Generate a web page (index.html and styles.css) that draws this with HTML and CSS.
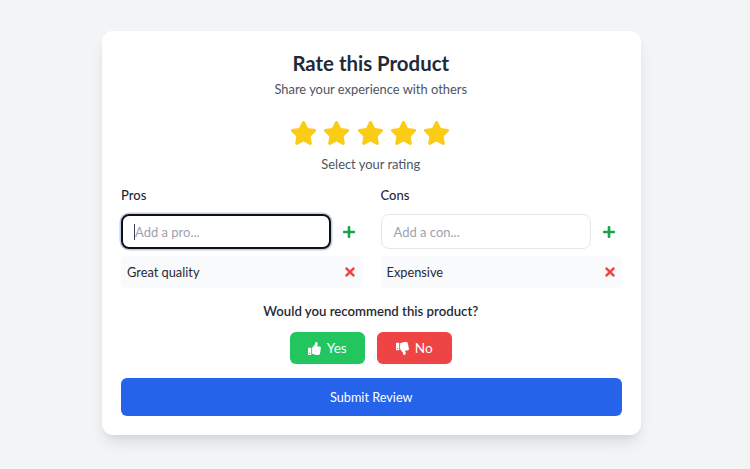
FILE: index.html
```html
<!DOCTYPE html>
<html lang="en">
<head>
<meta charset="utf-8">
<title>Rate this Product</title>
<link rel="stylesheet" href="styles.css">
</head>
<body>
<main class="card">
  <h1 class="title">Rate this Product</h1>
  <p class="subtitle">Share your experience with others</p>
  <div class="stars">
    <svg class="star" viewBox="0 0 576 512"><path d="M259.3 17.8L194 150.2 47.9 171.5c-26.2 3.8-36.7 36.1-17.7 54.6l105.7 103-25 145.5c-4.5 26.3 23.2 46 46.4 33.7L288 439.6l130.7 68.7c23.2 12.2 50.9-7.4 46.4-33.7l-25-145.5 105.7-103c19-18.5 8.5-50.8-17.7-54.6L382 150.2 316.7 17.8c-11.7-23.6-45.6-23.9-57.4 0z"/></svg>
    <svg class="star" viewBox="0 0 576 512"><path d="M259.3 17.8L194 150.2 47.9 171.5c-26.2 3.8-36.7 36.1-17.7 54.6l105.7 103-25 145.5c-4.5 26.3 23.2 46 46.4 33.7L288 439.6l130.7 68.7c23.2 12.2 50.9-7.4 46.4-33.7l-25-145.5 105.7-103c19-18.5 8.5-50.8-17.7-54.6L382 150.2 316.7 17.8c-11.7-23.6-45.6-23.9-57.4 0z"/></svg>
    <svg class="star" viewBox="0 0 576 512"><path d="M259.3 17.8L194 150.2 47.9 171.5c-26.2 3.8-36.7 36.1-17.7 54.6l105.7 103-25 145.5c-4.5 26.3 23.2 46 46.4 33.7L288 439.6l130.7 68.7c23.2 12.2 50.9-7.4 46.4-33.7l-25-145.5 105.7-103c19-18.5 8.5-50.8-17.7-54.6L382 150.2 316.7 17.8c-11.7-23.6-45.6-23.9-57.4 0z"/></svg>
    <svg class="star" viewBox="0 0 576 512"><path d="M259.3 17.8L194 150.2 47.9 171.5c-26.2 3.8-36.7 36.1-17.7 54.6l105.7 103-25 145.5c-4.5 26.3 23.2 46 46.4 33.7L288 439.6l130.7 68.7c23.2 12.2 50.9-7.4 46.4-33.7l-25-145.5 105.7-103c19-18.5 8.5-50.8-17.7-54.6L382 150.2 316.7 17.8c-11.7-23.6-45.6-23.9-57.4 0z"/></svg>
    <svg class="star" viewBox="0 0 576 512"><path d="M259.3 17.8L194 150.2 47.9 171.5c-26.2 3.8-36.7 36.1-17.7 54.6l105.7 103-25 145.5c-4.5 26.3 23.2 46 46.4 33.7L288 439.6l130.7 68.7c23.2 12.2 50.9-7.4 46.4-33.7l-25-145.5 105.7-103c19-18.5 8.5-50.8-17.7-54.6L382 150.2 316.7 17.8c-11.7-23.6-45.6-23.9-57.4 0z"/></svg>
  </div>
  <p class="hint">Select your rating</p>
  <div class="columns">
    <section class="column">
      <h2 class="label">Pros</h2>
      <div class="entry">
        <div class="field field-focus"><span class="caret"></span><span class="placeholder">Add a pro...</span></div>
        <svg class="plus" viewBox="0 0 448 512"><path d="M416 208H272V64c0-17.7-14.3-32-32-32h-32c-17.7 0-32 14.3-32 32v144H32c-17.7 0-32 14.3-32 32v32c0 17.7 14.3 32 32 32h144v144c0 17.7 14.3 32 32 32h32c17.7 0 32-14.3 32-32V304h144c17.7 0 32-14.3 32-32v-32c0-17.7-14.3-32-32-32z"/></svg>
      </div>
      <div class="item"><span>Great quality</span>
        <svg class="cross" viewBox="0 0 352 512"><path d="M242.7 256l100.1-100.1c12.3-12.3 12.3-32.2 0-44.5l-22.2-22.2c-12.3-12.3-32.2-12.3-44.5 0L176 189.3 75.9 89.2c-12.3-12.3-32.2-12.3-44.5 0L9.2 111.4c-12.3 12.3-12.3 32.2 0 44.5L109.3 256 9.2 356.1c-12.3 12.3-12.3 32.2 0 44.5l22.2 22.2c12.3 12.3 32.2 12.3 44.5 0L176 322.7l100.1 100.1c12.3 12.3 32.2 12.3 44.5 0l22.2-22.2c12.3-12.3 12.3-32.2 0-44.5L242.7 256z"/></svg>
      </div>
    </section>
    <section class="column">
      <h2 class="label">Cons</h2>
      <div class="entry">
        <div class="field"><span class="placeholder">Add a con...</span></div>
        <svg class="plus" viewBox="0 0 448 512"><path d="M416 208H272V64c0-17.7-14.3-32-32-32h-32c-17.7 0-32 14.3-32 32v144H32c-17.7 0-32 14.3-32 32v32c0 17.7 14.3 32 32 32h144v144c0 17.7 14.3 32 32 32h32c17.7 0 32-14.3 32-32V304h144c17.7 0 32-14.3 32-32v-32c0-17.7-14.3-32-32-32z"/></svg>
      </div>
      <div class="item"><span>Expensive</span>
        <svg class="cross" viewBox="0 0 352 512"><path d="M242.7 256l100.1-100.1c12.3-12.3 12.3-32.2 0-44.5l-22.2-22.2c-12.3-12.3-32.2-12.3-44.5 0L176 189.3 75.9 89.2c-12.3-12.3-32.2-12.3-44.5 0L9.2 111.4c-12.3 12.3-12.3 32.2 0 44.5L109.3 256 9.2 356.1c-12.3 12.3-12.3 32.2 0 44.5l22.2 22.2c12.3 12.3 32.2 12.3 44.5 0L176 322.7l100.1 100.1c12.3 12.3 32.2 12.3 44.5 0l22.2-22.2c12.3-12.3 12.3-32.2 0-44.5L242.7 256z"/></svg>
      </div>
    </section>
  </div>
  <p class="question">Would you recommend this product?</p>
  <div class="choices">
    <button class="choice yes">
      <svg class="thumb" viewBox="0 0 512 512"><path d="M104 224H24c-13.3 0-24 10.7-24 24v240c0 13.3 10.7 24 24 24h80c13.3 0 24-10.7 24-24V248c0-13.3-10.7-24-24-24zM64 472c-13.3 0-24-10.7-24-24s10.7-24 24-24 24 10.7 24 24-10.7 24-24 24zM384 81.5c0 42.4-26 66.2-33.3 94.5h101.7c33.4 0 59.4 27.7 59.6 58.1.1 17.9-7.5 37.2-19.4 49.2l-.1.1c9.8 23.3 8.2 56-9.3 79.4 8.7 25.9-.1 57.7-16.4 74.8 4.3 17.6 2.2 32.6-6.1 44.6C440.2 511.6 389.6 512 346.8 512l-2.8 0c-48.3 0-87.8-17.6-119.6-31.7-16-7.1-36.8-15.9-52.7-16.2-6.5-.1-11.8-5.5-11.8-12v-213.8c0-3.2 1.3-6.3 3.6-8.5 39.6-39.1 56.6-80.5 89.1-113 14.8-14.8 20.2-37.2 25.4-58.9C282.5 39.3 291.8 0 312 0c24 0 72 8 72 81.5z"/></svg>
      <span>Yes</span>
    </button>
    <button class="choice no">
      <svg class="thumb" viewBox="0 0 512 512"><path d="M0 56v240c0 13.3 10.7 24 24 24h80c13.3 0 24-10.7 24-24V56c0-13.3-10.7-24-24-24H24C10.7 32 0 42.7 0 56zm40 200c0-13.3 10.7-24 24-24s24 10.7 24 24-10.7 24-24 24-24-10.7-24-24zm272 256c-20.2 0-29.5-39.3-33.9-57.8-5.2-21.7-10.6-44.1-25.4-58.9-32.5-32.5-49.5-73.9-89.1-113-2.3-2.2-3.6-5.3-3.6-8.5V59.9c0-6.5 5.3-11.9 11.8-12 15.9-.3 36.7-9.1 52.7-16.2C256.2 17.6 295.7 0 344 0h2.8c42.8 0 93.4.4 113.8 29.8 8.3 12 10.4 27 6.1 44.6 16.3 17.1 25.1 48.9 16.4 74.8 17.5 23.4 19.1 56.1 9.3 79.4l.1.1c11.9 12 19.5 31.3 19.4 49.2-.2 30.4-26.2 58.1-59.6 58.1H350.7c7.3 28.3 33.3 52.1 33.3 94.5C384 504 336 512 312 512z"/></svg>
      <span>No</span>
    </button>
  </div>
  <button class="submit">Submit Review</button>
</main>
</body>
</html>
```

FILE: styles.css
```css
* { box-sizing: border-box; }
html, body { margin: 0; height: 100%; }
body {
  background: #f3f4f6;
  font-family: "Lato", "Noto Sans", sans-serif;
  color: #1f2937;
  padding: 31px 109.5px 0 102px;
}
.card {
  width: 538.5px;
  height: 404px;
  background: #fff;
  border-radius: 11px;
  padding: 19px;
  box-shadow: 0 10px 15px -3px rgba(0,0,0,.1), 0 4px 6px -2px rgba(0,0,0,.05);
  display: flex;
  flex-direction: column;
}
.title { margin: 0; padding-right: 1px; font-size: 20.4px; line-height: 27px; font-weight: 700; text-align: center; color: #1f2937; }
.subtitle { margin: 3px 0 0; padding-right: 1px; font-size: 12.9px; line-height: 19px; text-align: center; color: #4b5563; }
.stars { display: flex; justify-content: center; gap: 6.3px; margin-top: 22px; padding-right: 2px; }
.star { width: 27px; height: 24px; fill: #facc15; display: block; }
.hint { margin: 10px 0 0; padding-right: 1px; font-size: 12.9px; line-height: 19px; text-align: center; color: #4b5563; }
.columns { display: grid; grid-template-columns: 241px 241px; column-gap: 18.5px; margin-top: 12px; }
.label { margin: 0; font-family: "Lato Medium", "Lato", sans-serif; font-size: 13px; line-height: 19px; font-weight: 500; color: #1f2937; }
.entry { display: flex; align-items: center; margin-top: 9px; gap: 12px; }
.field { flex: 0 0 210px; height: 35px; border: 1px solid #e5e7eb; border-radius: 8px; padding: 0 12px; display: flex; align-items: center; font-size: 13px; }
.field-focus { border: 2.5px solid #111; box-shadow: 0 0 0 1.5px #bcd0f0; padding: 0 11px; }
.caret { width: 1px; height: 16px; background: #374151; }
.placeholder { color: #9ca3af; }
.plus { width: 12px; height: 14px; fill: #16a34a; }
.item { display: flex; align-items: center; justify-content: space-between; height: 32px; margin-top: 7px; padding: 0 7px 0 6px; background: #f9fafb; border-radius: 5px; font-size: 12.8px; color: #1f2937; }
.cross { width: 10px; height: 14px; fill: #ef4444; }
.question { margin: 14px 0 0; padding-right: 1px; font-family: "Lato Semibold", "Lato", sans-serif; font-size: 13.2px; line-height: 19px; font-weight: 600; text-align: center; color: #1f2937; }
.choices { display: flex; justify-content: center; gap: 12px; margin-top: 11px; padding-right: 1px; }
.choice { height: 32px; border: 0; border-radius: 6px; display: flex; align-items: center; justify-content: center; gap: 6px; color: #fff; font: inherit; font-size: 13.5px; padding: 0; box-shadow: 0 1px 2px rgba(0,0,0,.05); }
.yes { width: 75px; background: #22c55e; }
.no { width: 75px; background: #ef4444; }
.thumb { width: 13px; height: 13px; fill: #fff; }
.submit { flex: none; height: 38px; margin-top: 14px; width: 500.5px; border: 0; border-radius: 6px; background: #2563eb; color: #fff; font: inherit; font-size: 12.7px; }
```
